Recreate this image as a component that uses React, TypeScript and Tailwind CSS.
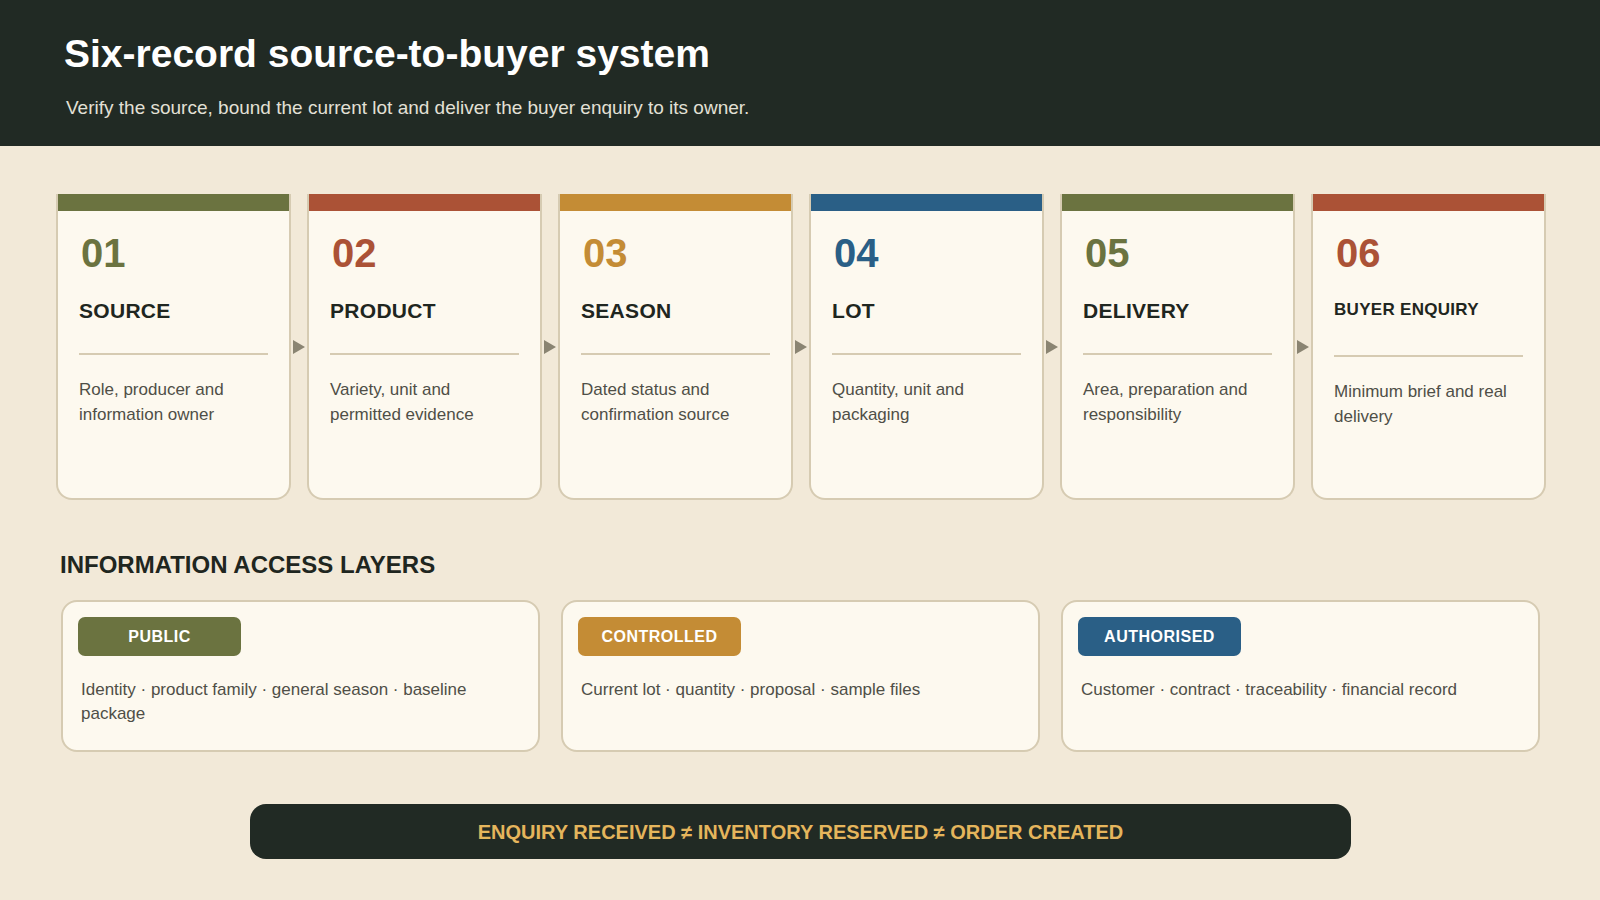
import React from "react";

const cards = [
  { n: "01", t: "SOURCE", d: "Role, producer and information owner", c: "#6b7340", small: false },
  { n: "02", t: "PRODUCT", d: "Variety, unit and permitted evidence", c: "#ab5236", small: false },
  { n: "03", t: "SEASON", d: "Dated status and confirmation source", c: "#c48c35", small: false },
  { n: "04", t: "LOT", d: "Quantity, unit and packaging", c: "#2a5f86", small: false },
  { n: "05", t: "DELIVERY", d: "Area, preparation and responsibility", c: "#6b7340", small: false },
  { n: "06", t: "BUYER ENQUIRY", d: "Minimum brief and real delivery", c: "#ab5236", small: true },
];

const layers = [
  { b: "PUBLIC", c: "#6b7340", d: "Identity · product family · general season · baseline package" },
  { b: "CONTROLLED", c: "#c48c35", d: "Current lot · quantity · proposal · sample files" },
  { b: "AUTHORISED", c: "#2a5f86", d: "Customer · contract · traceability · financial record" },
];

export default function App() {
  return (
    <div className="w-[1600px] h-[900px] bg-[#f2e9d8] overflow-hidden" style={{ fontFamily: '"Liberation Sans", Arial, sans-serif' }}>
      <div className="h-[146px] bg-[#212a24] pl-[64px] pt-[30px]">
        <h1 className="text-[39px] font-bold text-white leading-[48px]">Six-record source-to-buyer system</h1>
        <p className="mt-[16px] text-[19px] text-[#e3e0d6] ml-[2px]">Verify the source, bound the current lot and deliver the buyer enquiry to its owner.</p>
      </div>
      <div className="flex pl-[56px] mt-[48px]">
        {cards.map((c, i) => (
          <React.Fragment key={c.n}>
            {i > 0 && (
              <div className="w-[16px] flex items-center justify-center">
                <div className="w-0 h-0 border-t-[7px] border-b-[7px] border-l-[12px] border-t-transparent border-b-transparent border-l-[#8a8472]" />
              </div>
            )}
            <div className="w-[235px] h-[306px] bg-[#fdf9ef] border-2 border-t-0 border-[#d6cbb2] rounded-b-[16px] overflow-hidden flex flex-col">
              <div className="h-[17px] -mx-[2px]" style={{ background: c.c }} />
              <div className="px-[21px]">
                <div className="text-[40px] font-bold leading-none mt-[22px] ml-[2px]" style={{ color: c.c }}>{c.n}</div>
                <div className={`${c.small ? "text-[17px] mt-[24px]" : "text-[21px] mt-[22px]"} font-bold text-[#1f2620] tracking-[0.3px] h-[30px]`}>{c.t}</div>
                <div className="h-[2px] bg-[#d6cbb2] mt-[28px]" />
                <p className="mt-[22px] text-[17px] leading-[25px] text-[#4f4f47]">{c.d}</p>
              </div>
            </div>
          </React.Fragment>
        ))}
      </div>
      <h2 className="ml-[60px] mt-[50px] text-[24px] font-bold text-[#1f2620] leading-[30px]">INFORMATION ACCESS LAYERS</h2>
      <div className="flex gap-[21px] ml-[61px] mt-[20px]">
        {layers.map((l) => (
          <div key={l.b} className="w-[479px] h-[152px] bg-[#fdf9ef] border-2 border-[#d6cbb2] rounded-[16px] px-[15px] pt-[15px]">
            <div className="w-[163px] h-[39px] rounded-[7px] flex items-center justify-center text-white font-bold text-[16px] tracking-[0.5px]" style={{ background: l.c }}>{l.b}</div>
            <p className="mt-[22px] ml-[3px] text-[17px] leading-[24px] text-[#4f4f47] pr-[40px]">{l.d}</p>
          </div>
        ))}
      </div>
      <div className="ml-[250px] mt-[52px] w-[1101px] h-[55px] bg-[#212a24] rounded-[16px] flex items-center justify-center text-[20px] font-bold text-[#e5b55c]">
        ENQUIRY RECEIVED ≠ INVENTORY RESERVED ≠ ORDER CREATED
      </div>
    </div>
  );
}
